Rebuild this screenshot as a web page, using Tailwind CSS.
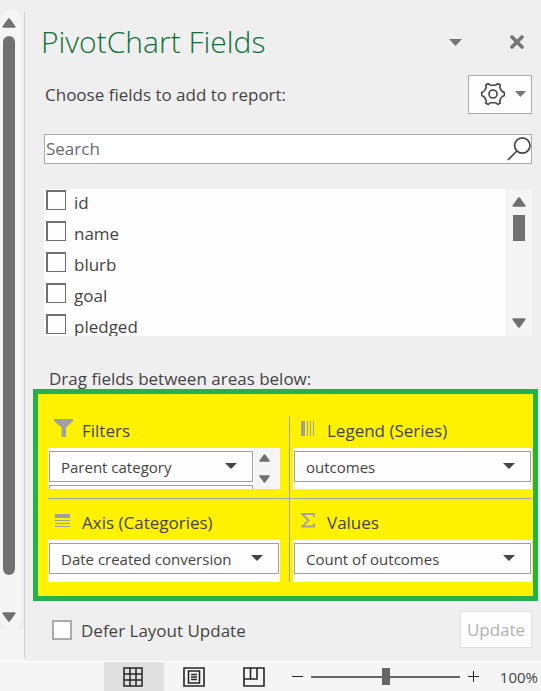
<!DOCTYPE html>
<html lang="en">
<head>
<meta charset="utf-8">
<meta name="viewport" content="width=device-width, initial-scale=1">
<title>PivotChart Fields</title>
<script src="https://cdn.jsdelivr.net/npm/@tailwindcss/browser@4"></script>
</head>
<body class="flex min-h-screen flex-col bg-[#efefef] font-['Open_Sans','Noto_Sans',sans-serif] text-[17px] text-[#444444]">
<div class="flex flex-1">
  <!-- Worksheet scrollbar -->
  <div class="flex w-6 shrink-0 flex-col pt-[10px]">
    <div class="flex w-[22px] flex-1 flex-col items-center rounded-xl bg-[#f5f5f5] pt-2 pr-1 pb-[7px]">
      <button type="button" aria-label="Scroll up" class="block"><svg class="block" width="14" height="10" viewBox="0 0 14 10"><path d="M7 1.2 12.6 8.8H1.4Z" fill="#707070" stroke="#707070" stroke-width="2" stroke-linejoin="round"/></svg></button>
      <div class="mt-2 w-3 flex-1 rounded-full bg-[#707070]"></div>
      <button type="button" aria-label="Scroll down" class="mt-[37px] block"><svg class="block" width="14" height="10" viewBox="0 0 14 10"><path d="M7 8.8 12.6 1.2H1.4Z" fill="#707070" stroke="#707070" stroke-width="2" stroke-linejoin="round"/></svg></button>
    </div>
    <div class="h-8 bg-[#f5f5f5]"></div>
  </div>

  <!-- Field pane -->
  <main class="mt-3 mb-[3px] min-w-0 flex-1 border-l border-[#cfcfcf] pt-3 pr-[9px] pl-[19px]">
    <header class="flex h-9 items-center">
      <h1 class="-ml-[3px] flex-1 text-[30px] leading-9 font-light whitespace-nowrap text-[#0e7039]">PivotChart Fields</h1>
      <button type="button" aria-label="Pane options" class="mr-12"><svg class="block" width="13" height="7" viewBox="0 0 13 7"><path d="M0 0H13L6.500 7Z" fill="#757575"/></svg></button>
      <button type="button" aria-label="Close" class="mr-2"><svg class="block" width="14" height="14" viewBox="0 0 14 14"><path d="M2 2 12 12M12 2 2 12" stroke="#757575" stroke-width="3.600" stroke-linecap="round"/></svg></button>
    </header>

    <div class="mt-[15px] flex items-center justify-between">
      <p class="pl-px whitespace-nowrap">Choose fields to add to report:</p>
      <button type="button" aria-label="Tools" class="flex h-[39px] w-16 items-center gap-[10px] border border-[#ababab] bg-[#fdfdfd] pb-[2px] pl-3">
        <svg class="shrink-0" width="24" height="24" viewBox="0 0 24 24" fill="none" stroke="#444" stroke-width="1.600" stroke-linejoin="round"><path d="M7.300 1.500Q8.500 3.200 10 3.200H14Q15.500 3.200 16.700 1.500L19.300 3Q18.400 5 19.200 6.300L20.400 8.500Q21.300 10.200 23.300 10.400V13.600Q21.300 13.800 20.400 15.500L19.200 17.700Q18.400 19 19.300 21L16.700 22.500Q15.500 20.800 14 20.800H10Q8.500 20.800 7.300 22.500L4.700 21Q5.600 19 4.800 17.700L3.600 15.500Q2.700 13.800 .7 13.600V10.400Q2.700 10.200 3.600 8.500L4.800 6.300Q5.600 5 4.700 3Z"/><circle cx="12" cy="12" r="4"/></svg>
        <svg class="shrink-0" width="11" height="6" viewBox="0 0 11 6"><path d="M0 0H11L5.500 6Z" fill="#757575"/></svg>
      </button>
    </div>

    <form role="search" class="mt-5 flex h-[30px] items-center border border-[#ababab] bg-white">
      <input type="text" aria-label="Search fields" placeholder="Search" class="min-w-0 flex-1 pl-px outline-none placeholder:text-[#6a6a6a]">
      <button type="button" aria-label="Search" class="shrink-0"><svg class="block" width="24" height="26" viewBox="0 0 24 26" fill="none" stroke="#444" stroke-width="1.700"><circle cx="15.300" cy="9.500" r="7.700"/><path d="M9.900 15 1 24"/></svg></button>
    </form>

    <div class="mt-[25px] flex h-[147px] overflow-hidden bg-[#fdfdfd]">
      <div class="flex-1 overflow-hidden">
        <label class="flex h-[31px] gap-2 pl-[2px] leading-[27px]"><input type="checkbox" class="mt-px size-5 shrink-0 appearance-none border-t-2 border-r border-b border-l-2 border-[#707070] bg-[#fdfdfd] checked:bg-[#707070]">id</label>
        <label class="flex h-[31px] gap-2 pl-[2px] leading-[27px]"><input type="checkbox" class="mt-px size-5 shrink-0 appearance-none border-t-2 border-r border-b border-l-2 border-[#707070] bg-[#fdfdfd] checked:bg-[#707070]">name</label>
        <label class="flex h-[31px] gap-2 pl-[2px] leading-[27px]"><input type="checkbox" class="mt-px size-5 shrink-0 appearance-none border-t-2 border-r border-b border-l-2 border-[#707070] bg-[#fdfdfd] checked:bg-[#707070]">blurb</label>
        <label class="flex h-[31px] gap-2 pl-[2px] leading-[27px]"><input type="checkbox" class="mt-px size-5 shrink-0 appearance-none border-t-2 border-r border-b border-l-2 border-[#707070] bg-[#fdfdfd] checked:bg-[#707070]">goal</label>
        <label class="flex h-[31px] gap-2 pl-[2px] leading-[27px]"><input type="checkbox" class="mt-px size-5 shrink-0 appearance-none border-t-2 border-r border-b border-l-2 border-[#707070] bg-[#fdfdfd] checked:bg-[#707070]">pledged</label>
      </div>
      <div class="flex w-[26px] flex-col items-center bg-[#f5f5f5] py-2">
        <button type="button" aria-label="Scroll fields up"><svg class="block" width="14" height="10" viewBox="0 0 14 10"><path d="M7 1.200 12.600 8.800H1.400Z" fill="#707070" stroke="#707070" stroke-width="2" stroke-linejoin="round"/></svg></button>
        <div class="mt-2 h-[26px] w-3 bg-[#707070]"></div>
        <button type="button" aria-label="Scroll fields down" class="mt-auto"><svg class="block" width="14" height="10" viewBox="0 0 14 10"><path d="M7 8.800 12.600 1.200H1.400Z" fill="#707070" stroke="#707070" stroke-width="2" stroke-linejoin="round"/></svg></button>
      </div>
    </div>

    <p class="mt-[33px] pl-[5px] leading-5 whitespace-nowrap">Drag fields between areas below:</p>

    <!-- Drop areas -->
    <section class="-mr-[6px] -ml-[11px] grid grid-cols-2 border-5 border-[#22b14c] bg-[#fff200] pt-[22px] pr-px pb-[14px] pl-[10px]">
      <div class="border-r border-b border-[#a6a6a6] pr-[9px] pb-[9px]">
        <h2 class="flex h-8 items-center gap-[9px] pb-[2px] pl-[6px]">
          <svg class="mb-[6px] shrink-0" width="19" height="18" viewBox="0 0 19 18"><path d="M0 0H19V2L12 8.500V18H7.500V8.500L0 2Z" fill="#a0a0a0"/></svg>
          <label for="filters">Filters</label>
        </h2>
        <div class="flex bg-[#f5f5f5]">
          <div class="h-[41px] flex-1 overflow-hidden bg-white pt-[3px] pr-px pl-px">
            <div class="relative">
              <select id="filters" class="block h-[31px] w-full appearance-none border border-[#a0a0a0] bg-[#fdfdfd] pt-[2px] pl-[11px] text-[15px] outline-none"><option>Parent category</option></select>
              <svg class="pointer-events-none absolute top-3 right-4" width="12" height="6" viewBox="0 0 12 6"><path d="M0 0H12L6 6Z" fill="#444"/></svg>
            </div>
            <div class="mt-[3px] h-2 border border-[#a0a0a0] bg-[#fdfdfd]"></div>
          </div>
          <div class="flex w-[26px] flex-col justify-between pt-[6px] pb-[6px] pl-[5px]">
            <button type="button" aria-label="Scroll filters up"><svg class="block" width="11" height="8" viewBox="0 0 11 8"><path d="M5.500 1 10 7H1Z" fill="#707070" stroke="#707070" stroke-width="1.600" stroke-linejoin="round"/></svg></button>
            <button type="button" aria-label="Scroll filters down"><svg class="block" width="11" height="8" viewBox="0 0 11 8"><path d="M5.500 7 10 1H1Z" fill="#707070" stroke="#707070" stroke-width="1.600" stroke-linejoin="round"/></svg></button>
          </div>
        </div>
      </div>

      <div class="border-b border-[#a6a6a6] pb-[9px] pl-[3px]">
        <h2 class="flex h-8 items-center gap-[13px] pb-[2px] pl-2">
          <svg class="mb-[6px] shrink-0" width="13" height="15" viewBox="0 0 13 15" fill="#a0a0a0"><path d="M0 0H4V15H0ZM6 0H7V15H6ZM9 0H10V15H9ZM12 0H13V15H12Z"/></svg>
          <label for="legend">Legend (Series)</label>
        </h2>
        <div class="h-[41px] bg-white px-px pt-[3px]">
          <div class="relative">
            <select id="legend" class="block h-[31px] w-full appearance-none border border-[#a0a0a0] bg-[#fdfdfd] pt-[2px] pl-[11px] text-[15px] outline-none"><option>outcomes</option></select>
            <svg class="pointer-events-none absolute top-3 right-4" width="12" height="6" viewBox="0 0 12 6"><path d="M0 0H12L6 6Z" fill="#444"/></svg>
          </div>
        </div>
      </div>

      <div class="border-r border-[#a6a6a6] pt-[9px] pr-[9px]">
        <h2 class="flex h-8 items-center gap-3 pb-[2px] pl-[7px]">
          <svg class="mb-[6px] shrink-0" width="15" height="13" viewBox="0 0 15 13" fill="#a0a0a0"><path d="M0 0H15V4H0ZM0 6H15V7H0ZM0 9H15V10H0ZM0 12H15V13H0Z"/></svg>
          <label for="axis">Axis (Categories)</label>
        </h2>
        <div class="h-[42px] bg-white px-px pt-[3px]">
          <div class="relative">
            <select id="axis" class="block h-[31px] w-full appearance-none border border-[#a0a0a0] bg-[#fdfdfd] pt-[2px] pl-[11px] text-[15px] outline-none"><option>Date created conversion</option></select>
            <svg class="pointer-events-none absolute top-3 right-4" width="12" height="6" viewBox="0 0 12 6"><path d="M0 0H12L6 6Z" fill="#444"/></svg>
          </div>
        </div>
      </div>

      <div class="pt-[9px] pl-[3px]">
        <h2 class="flex h-8 items-center gap-3 pb-[2px] pl-2">
          <svg class="mb-[6px] shrink-0" width="14" height="15" viewBox="0 0 14 15"><path d="M12.800 4V1H1.200L7.500 7.300 1.200 13.500H13V10.500" fill="none" stroke="#a0a0a0" stroke-width="1.800"/></svg>
          <label for="values">Values</label>
        </h2>
        <div class="h-[42px] bg-white px-px pt-[3px]">
          <div class="relative">
            <select id="values" class="block h-[31px] w-full appearance-none border border-[#a0a0a0] bg-[#fdfdfd] pt-[2px] pl-[11px] text-[15px] outline-none"><option>Count of outcomes</option></select>
            <svg class="pointer-events-none absolute top-3 right-4" width="12" height="6" viewBox="0 0 12 6"><path d="M0 0H12L6 6Z" fill="#444"/></svg>
          </div>
        </div>
      </div>
    </section>

    <div class="mt-[10px] mb-[10px] flex items-center justify-between pl-2">
      <label class="flex items-center gap-[9px] whitespace-nowrap"><input type="checkbox" class="size-5 shrink-0 appearance-none border-2 border-[#ababab] bg-[#fdfdfd] checked:bg-[#707070]"><span class="pt-[2px]">Defer Layout Update</span></label>
      <button type="button" disabled class="h-[37px] w-[72px] border border-[#dedede] bg-[#fdfdfd] text-[#b1b1b1]">Update</button>
    </div>
  </main>
</div>

<!-- Status bar -->
<footer class="flex h-[30px] items-center border-t border-white bg-[#f5f5f5] pl-[104px]">
  <button type="button" aria-label="Normal view" class="flex h-full w-[60px] items-center justify-center bg-[#e0e0e0] pr-[2px]"><svg width="20" height="20" viewBox="0 0 20 20" fill="none" stroke="#262626" stroke-width="1.500"><path d="M1 1H19V19H1ZM7 1V19M13 1V19M1 7H19M1 13H19"/></svg></button>
  <button type="button" aria-label="Page layout view" class="flex h-full w-[60px] items-center justify-center"><svg width="22" height="20" viewBox="0 0 22 20" fill="none" stroke="#262626" stroke-width="1.600"><path d="M1 1H21V19H1ZM5.500 4H16.500V16H5.500Z"/><path d="M8 7.500H14M8 10H14M8 12.500H14" stroke-width="1.300"/></svg></button>
  <button type="button" aria-label="Page break preview" class="flex h-full w-[60px] items-center justify-center"><svg width="22" height="20" viewBox="0 0 22 20" fill="none" stroke="#262626" stroke-width="1.600"><path d="M1 1H21V19H1ZM1 12H14V1M7.500 1V12"/></svg></button>
  <button type="button" aria-label="Zoom out" class="ml-2 shrink-0"><svg class="block" width="11" height="11" viewBox="0 0 11 11"><path d="M0 5.500H11" stroke="#262626"/></svg></button>
  <input type="range" aria-label="Zoom" min="0" max="100" value="50" class="mx-2 h-5 min-w-0 flex-1 appearance-none bg-transparent [&::-webkit-slider-runnable-track]:h-[2px] [&::-webkit-slider-runnable-track]:bg-[#666666] [&::-webkit-slider-thumb]:-mt-[8px] [&::-webkit-slider-thumb]:h-[17px] [&::-webkit-slider-thumb]:w-2 [&::-webkit-slider-thumb]:appearance-none [&::-webkit-slider-thumb]:bg-[#666666]">
  <button type="button" aria-label="Zoom in" class="shrink-0"><svg class="block" width="11" height="11" viewBox="0 0 11 11"><path d="M0 5.500H11M5.500 0V11" stroke="#262626"/></svg></button>
  <span class="w-[62px] shrink-0 pt-[2px] pr-[3px] text-right text-[15px]">100%</span>
</footer>
</body>
</html>
